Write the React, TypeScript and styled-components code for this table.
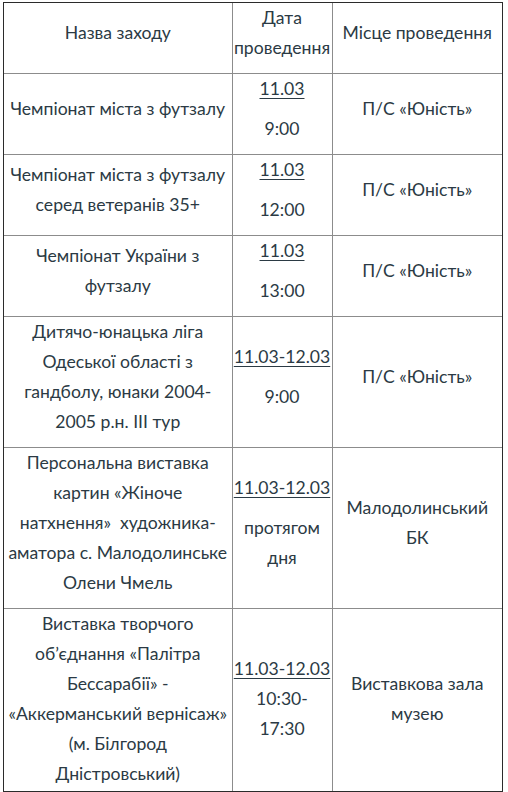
import React from "react";
import styled, { createGlobalStyle } from "styled-components";

const Global = createGlobalStyle`
  html, body { margin: 0; padding: 0; background: #ffffff; }
  body { font-family: Lato, "Noto Sans", sans-serif; }
`;

const Frame = styled.div`
  box-sizing: border-box;
  margin: 2px 0 0 3px;
  width: 500px;
  height: 790px;
  border: 1px solid #2b2b2b;
  overflow: hidden;
  background: #fff;
`;

const Table = styled.table`
  width: 100%;
  border-collapse: collapse;
  border-style: hidden;
  table-layout: fixed;
  font-family: Lato, "Noto Sans", sans-serif;
  font-size: 17.6px;
  line-height: 30px;
  color: #2b3a44;
`;

const Cell = styled.td`
  border: 1px solid #8c8c8c;
  padding: 0;
  text-align: center;
  vertical-align: middle;
  white-space: nowrap;
  font-weight: 400;
`;

const Para = styled.p`
  margin: 0 0 10px;
`;

const DateLink = styled.a`
  color: inherit;
  text-decoration: underline;
  text-decoration-thickness: 1px;
  text-underline-offset: 3px;
`;

type Row = {
  name: string[];
  date: string;
  time: string[];
  joined?: boolean;
  place: string[];
};

const rows: Row[] = [
  { name: ["Чемпіонат міста з футзалу"], date: "11.03", time: ["9:00"], place: ["П/С «Юність»"] },
  { name: ["Чемпіонат міста з футзалу", "серед ветеранів 35+"], date: "11.03", time: ["12:00"], place: ["П/С «Юність»"] },
  { name: ["Чемпіонат України з", "футзалу"], date: "11.03", time: ["13:00"], place: ["П/С «Юність»"] },
  {
    name: ["Дитячо-юнацька ліга", "Одеської області з", "гандболу, юнаки 2004-", "2005 р.н. ІІІ тур"],
    date: "11.03-12.03",
    time: ["9:00"],
    place: ["П/С «Юність»"],
  },
  {
    name: ["Персональна виставка", "картин «Жіноче", "натхнення»\u00a0 художника-", "аматора с. Малодолинське", "Олени Чмель"],
    date: "11.03-12.03",
    time: ["протягом", "дня"],
    place: ["Малодолинський", "БК"],
  },
  {
    name: ["Виставка творчого", "об’єднання «Палітра", "Бессарабії» -", "«Аккерманський вернісаж»", "(м. Білгород", "Дністровський)"],
    date: "11.03-12.03",
    time: ["10:30-", "17:30"],
    joined: true,
    place: ["Виставкова зала", "музею"],
  },
];

const Lines = ({ lines }: { lines: string[] }) => (
  <>
    {lines.map((l, i) => (
      <React.Fragment key={i}>
        {i > 0 && <br />}
        {l}
      </React.Fragment>
    ))}
  </>
);

export default function App() {
  return (
    <>
      <Global />
      <Frame>
        <Table>
          <colgroup>
            <col style={{ width: 228 }} />
            <col style={{ width: 100 }} />
            <col />
          </colgroup>
          <tbody>
            <tr>
              <Cell as="th">
                <Para>Назва заходу</Para>
              </Cell>
              <Cell as="th">
                <Para>
                  Дата
                  <br />
                  проведення
                </Para>
              </Cell>
              <Cell as="th">
                <Para>Місце проведення</Para>
              </Cell>
            </tr>
            {rows.map((r, i) => (
              <tr key={i}>
                <Cell>
                  <Para>
                    <Lines lines={r.name} />
                  </Para>
                </Cell>
                <Cell>
                  {r.joined ? (
                    <Para>
                      <DateLink href="#">{r.date}</DateLink>
                      <br />
                      <Lines lines={r.time} />
                    </Para>
                  ) : (
                    <>
                      <Para>
                        <DateLink href="#">{r.date}</DateLink>
                      </Para>
                      <Para>
                        <Lines lines={r.time} />
                      </Para>
                    </>
                  )}
                </Cell>
                <Cell>
                  <Para>
                    <Lines lines={r.place} />
                  </Para>
                </Cell>
              </tr>
            ))}
          </tbody>
        </Table>
      </Frame>
    </>
  );
}
